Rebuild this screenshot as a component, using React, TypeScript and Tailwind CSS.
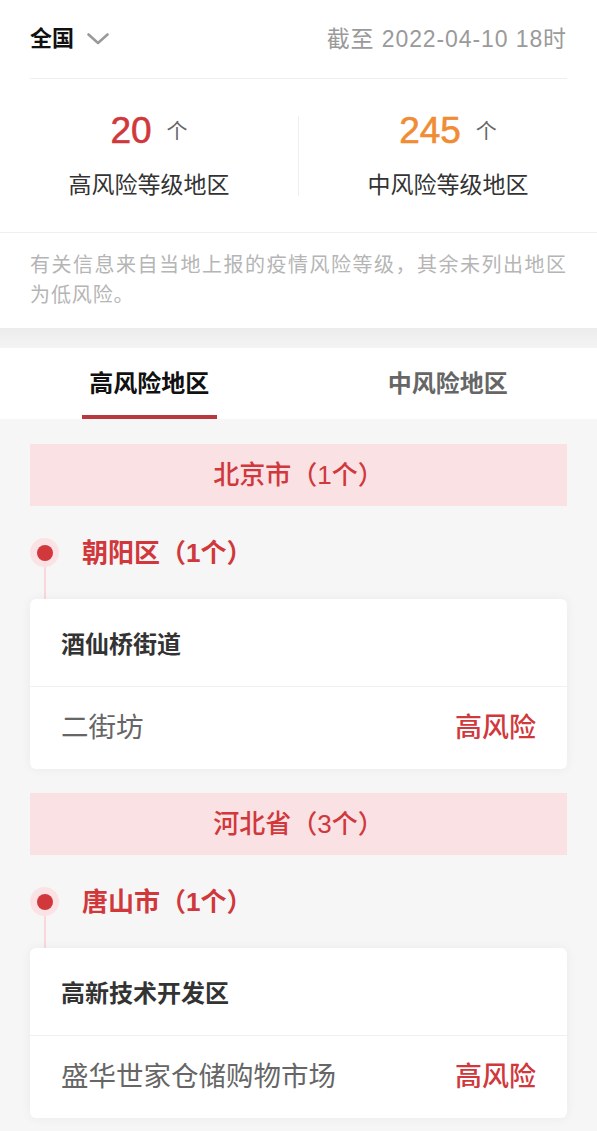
import React from "react";

const RED = "text-[#d0383c]";

function Chevron() {
  return (
    <svg width="22" height="12" viewBox="0 0 22 12" fill="none">
      <polyline points="1.5,1.5 11,10 20.5,1.5" stroke="#9a9a9a" strokeWidth="2.6" strokeLinecap="round" strokeLinejoin="round" />
    </svg>
  );
}

function Card({ title, place }: { title: string; place: string }) {
  return (
    <div className="bg-white rounded-[6px] shadow-[0_0_12px_rgba(0,0,0,0.05)]">
      <div className="h-[88px] flex items-center px-[31px] pt-[4px] border-b border-[#f0f0f0]">
        <span className="text-[24px] leading-none font-bold text-[#333]">{title}</span>
      </div>
      <div className="h-[82px] flex items-center justify-between px-[31px]">
        <span className="text-[27.5px] leading-none text-[#666]">{place}</span>
        <span className={`text-[27px] leading-none font-medium ${RED}`}>高风险</span>
      </div>
    </div>
  );
}

function Group({ province, city, title, place, first }: { province: string; city: string; title: string; place: string; first?: boolean }) {
  return (
    <div className={first ? "" : "mt-[24px]"}>
      <div className={`h-[62px] bg-[#fae1e4] flex items-center justify-center text-[26px] leading-none font-medium ${RED}`}>
        {province}
      </div>
      <div className="mt-[32px] flex items-center h-[29px]">
        <div className="w-[29px] h-[29px] rounded-full bg-[#fbe2e5] flex items-center justify-center">
          <div className="w-[16px] h-[16px] rounded-full bg-[#d0383c]" />
        </div>
        <span className={`ml-[23px] text-[26px] leading-none font-semibold ${RED}`}>{city}</span>
      </div>
      <div className="ml-[14px] w-[2px] h-[32px] bg-[#f9d7db]" />
      <Card title={title} place={place} />
    </div>
  );
}

export default function App() {
  return (
    <div className="w-[597px] min-h-[1131px] bg-[#f6f6f6] font-['Liberation_Sans','Noto_Sans_CJK_SC',sans-serif]">
      <div className="bg-white px-[30px]">
        <div className="h-[79px] flex items-center justify-between border-b border-[#efefef]">
          <div className="flex items-center gap-[13px]">
            <span className="text-[22px] leading-none font-bold text-[#111]">全国</span>
            <Chevron />
          </div>
          <span className="text-[23px] leading-none tracking-[0.9px] text-[#9a9a9a]">截至 2022-04-10 18时</span>
        </div>
        <div className="flex items-start pt-[33px] pb-[35px] border-b border-[#efefef] -mx-[30px] px-0">
          <div className="flex-1 flex flex-col items-center">
            <div className="h-[36px] flex items-center gap-[15px]">
              <span className="text-[37px] leading-none text-[#d0383c] [-webkit-text-stroke:0.6px_#d0383c]">20</span>
              <span className="text-[21px] leading-none text-[#666]">个</span>
            </div>
            <span className="mt-[26px] text-[23px] leading-none text-[#333]">高风险等级地区</span>
          </div>
          <div className="mt-[4px] w-px h-[80px] bg-[#eeeeee]" />
          <div className="flex-1 flex flex-col items-center">
            <div className="h-[36px] flex items-center gap-[15px]">
              <span className="text-[37px] leading-none text-[#f08c34] [-webkit-text-stroke:0.6px_#f08c34]">245</span>
              <span className="text-[21px] leading-none text-[#666]">个</span>
            </div>
            <span className="mt-[26px] text-[23px] leading-none text-[#333]">中风险等级地区</span>
          </div>
        </div>
        <p className="pt-[17px] pb-[18px] text-[20px] leading-[30px] tracking-[0.9px] text-justify text-[#b5b5b5]">
          有关信息来自当地上报的疫情风险等级，其余未列出地区为低风险。
        </p>
      </div>
      <div className="h-[20px] bg-linear-to-b from-[#ececec] to-[#f4f4f4]" />
      <div className="bg-white h-[71px] flex">
        <div className="flex-1 flex flex-col items-center">
          <span className="mt-[24px] text-[24px] leading-none font-bold text-[#111]">高风险地区</span>
          <div className="flex-1" />
          <div className="w-[135px] h-[4px] bg-[#b9383d]" />
        </div>
        <div className="flex-1 flex flex-col items-center">
          <span className="mt-[24px] text-[24px] leading-none font-bold text-[#666]">中风险地区</span>
        </div>
      </div>
      <div className="px-[30px] pt-[25px] pb-[13px]">
        <Group first province="北京市（1个）" city="朝阳区（1个）" title="酒仙桥街道" place="二街坊" />
        <Group province="河北省（3个）" city="唐山市（1个）" title="高新技术开发区" place="盛华世家仓储购物市场" />
      </div>
    </div>
  );
}
